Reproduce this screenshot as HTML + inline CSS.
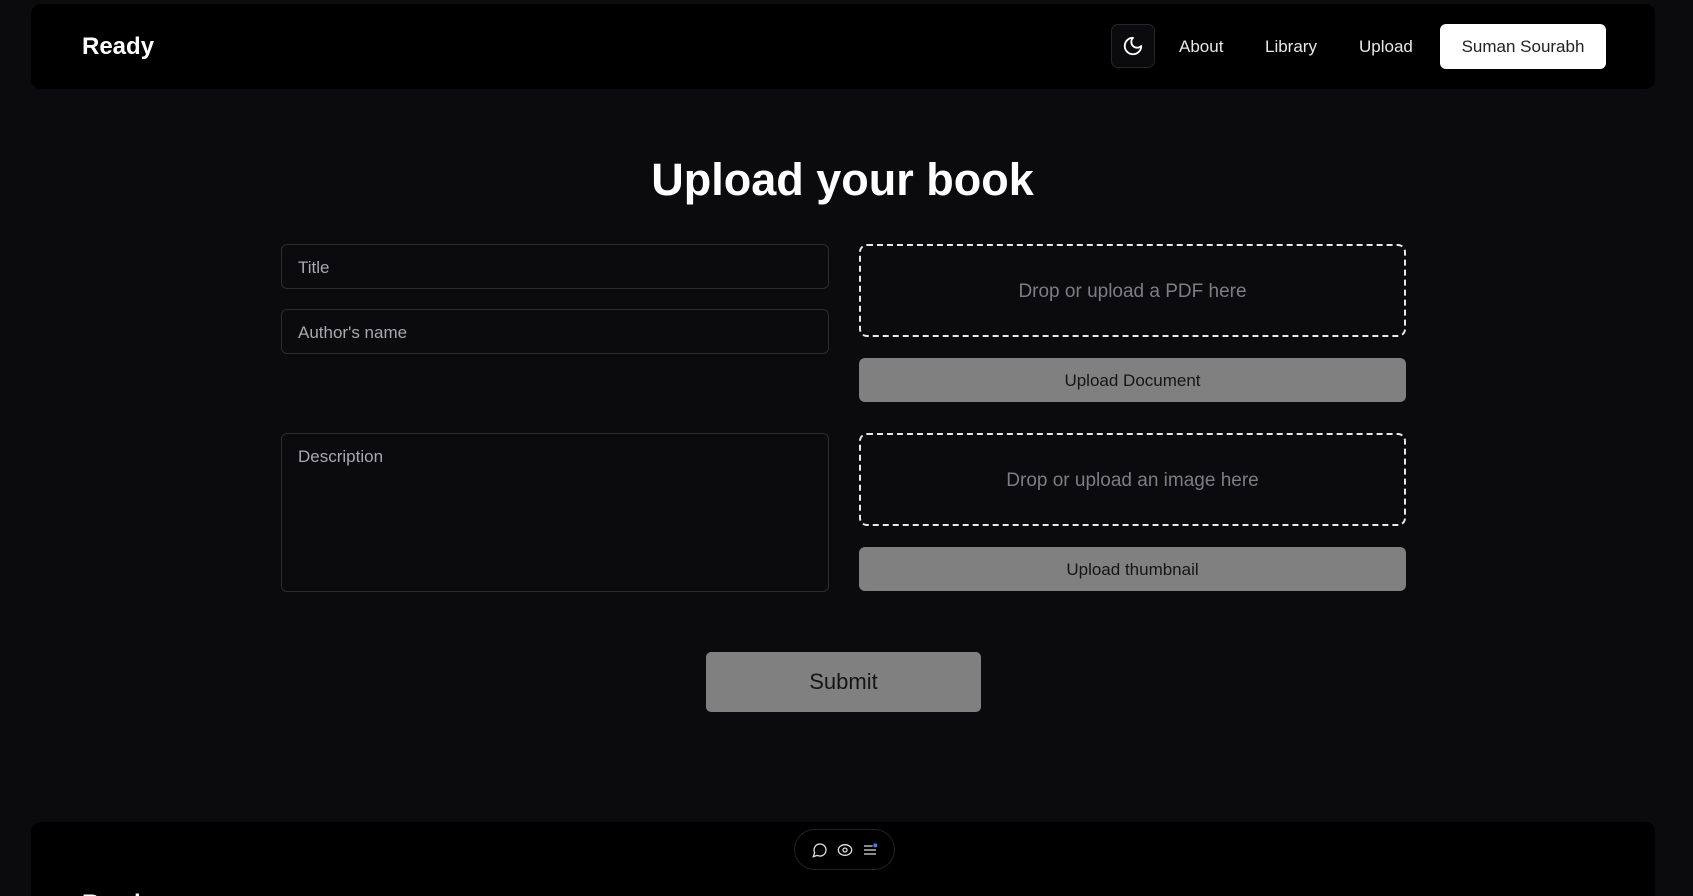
<!DOCTYPE html>
<html><head><meta charset="utf-8"><style>
*{box-sizing:border-box;margin:0;padding:0}
html,body{width:1693px;height:896px;overflow:hidden}
body{background:#0b0b0d;font-family:"Liberation Sans",sans-serif;color:#fff;position:relative}
.abs{position:absolute}
nav{position:absolute;left:31px;top:4px;width:1624px;height:85px;background:#000;border-radius:10px}
.logo{left:82px;top:33px;font-size:24px;font-weight:bold}
.link{font-size:17px;color:#e8e8e8;top:37px}
.moon{left:1111px;top:24px;width:44px;height:44px;border:1px solid #26262a;border-radius:7px;background:#0b0b0d;display:flex;align-items:center;justify-content:center}
.user{left:1440px;top:24px;width:166px;height:45px;background:#fff;color:#222;border-radius:6px;font-size:17px;display:flex;align-items:center;justify-content:center}
h1{position:absolute;left:0;width:1685px;text-align:center;top:154px;font-size:45px;font-weight:bold}
.inp{border:1px solid #2c2c30;border-radius:6px;background:#0b0b0d;color:#a8a8ad;font-size:17px;padding:13px 16px;left:281px;width:548px}
.drop{left:859px;width:547px;height:93px;border:2px dashed #e8e8e8;border-radius:8px;display:flex;align-items:center;justify-content:center;color:#7d7d82;font-size:19px;padding-top:3px}
.btn{left:859px;width:547px;height:44px;background:#808080;border-radius:6px;color:#151515;font-size:17px;display:flex;align-items:center;justify-content:center;padding-top:2px}
.sub{left:706px;top:652px;width:275px;height:60px;background:#808080;border-radius:5px;color:#151515;font-size:22px;display:flex;align-items:center;justify-content:center}
footer{position:absolute;left:31px;top:822px;width:1624px;height:74px;background:#000;border-radius:10px 10px 0 0;overflow:hidden}
.pill{left:794px;top:829px;width:101px;height:41px;border:1px solid #222;border-radius:21px;background:#000;display:flex;align-items:center;justify-content:space-around;padding:0 12px}
</style></head><body>
<nav></nav>
<div class="abs logo">Ready</div>
<div class="abs moon"><svg width="22" height="22" viewBox="0 0 24 24" fill="none" stroke="#fff" stroke-width="2" stroke-linecap="round" stroke-linejoin="round"><path d="M12 3a6 6 0 0 0 9 9 9 9 0 1 1-9-9Z"/></svg></div>
<div class="abs link" style="left:1179px">About</div>
<div class="abs link" style="left:1265px">Library</div>
<div class="abs link" style="left:1359px">Upload</div>
<div class="abs user">Suman Sourabh</div>
<h1>Upload your book</h1>
<div class="abs inp" style="top:244px;height:45px">Title</div>
<div class="abs inp" style="top:309px;height:45px">Author's name</div>
<div class="abs inp" style="top:433px;height:159px">Description</div>
<div class="abs drop" style="top:244px">Drop or upload a PDF here</div>
<div class="abs btn" style="top:358px">Upload Document</div>
<div class="abs drop" style="top:433px">Drop or upload an image here</div>
<div class="abs btn" style="top:547px">Upload thumbnail</div>
<div class="abs sub">Submit</div>
<footer><div class="abs" style="left:51px;top:68px;font-size:24px;font-weight:bold">Ready</div></footer>
<div class="abs pill">
<svg width="16" height="16" viewBox="0 0 24 24" fill="none" stroke="#ddd" stroke-width="2"><path d="M7.9 20A9 9 0 1 0 4 16.1L2 22Z"/></svg>
<svg width="16" height="16" viewBox="0 0 24 24" fill="none" stroke="#ddd" stroke-width="2"><ellipse cx="12" cy="12" rx="10" ry="8"/><circle cx="12" cy="12" r="3"/></svg>
<svg width="16" height="16" viewBox="0 0 24 24" fill="none" stroke="#ddd" stroke-width="2"><path d="M3 6h13M3 12h18M3 18h18"/><circle cx="20" cy="5" r="3" fill="#3b82f6" stroke="none"/></svg>
</div>
</body></html>
